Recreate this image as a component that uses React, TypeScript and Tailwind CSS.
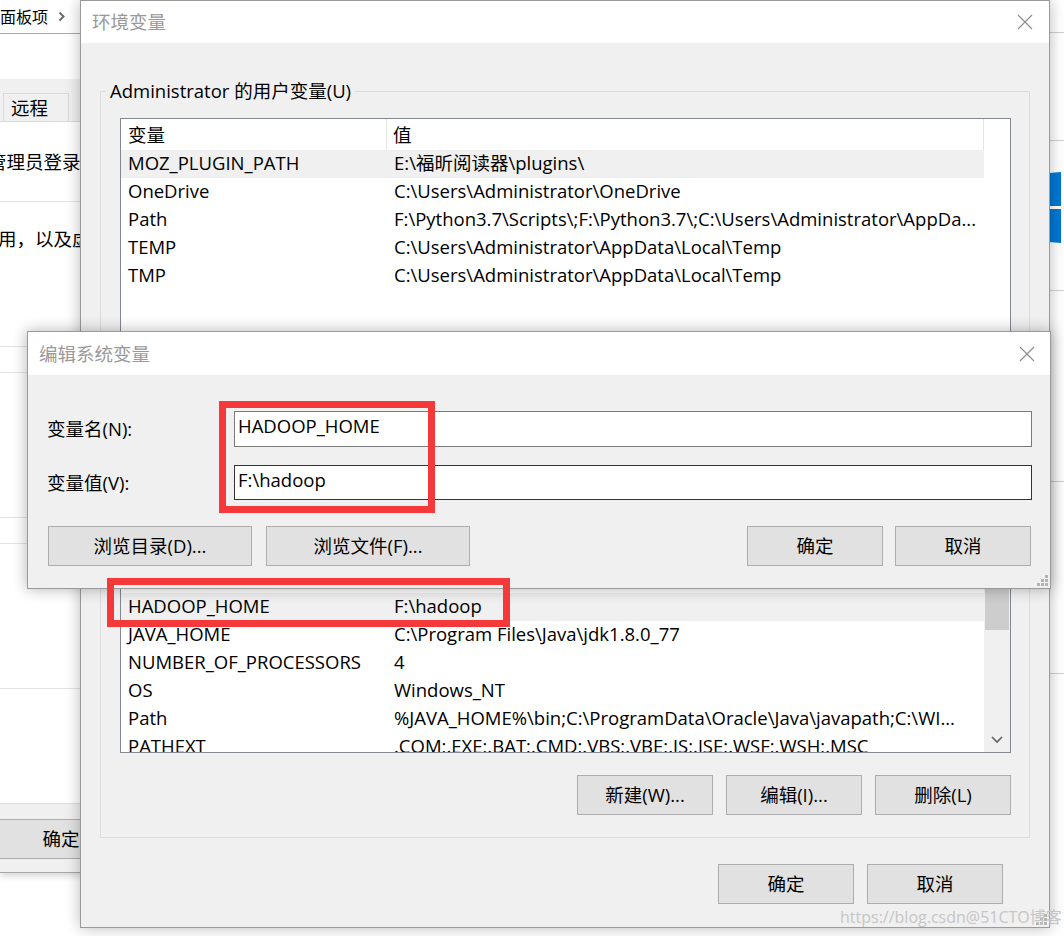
import React from "react";

type Row = [string, string];

const userRows: Row[] = [
  ["MOZ_PLUGIN_PATH", "E:\\福昕阅读器\\plugins\\"],
  ["OneDrive", "C:\\Users\\Administrator\\OneDrive"],
  ["Path", "F:\\Python3.7\\Scripts\\;F:\\Python3.7\\;C:\\Users\\Administrator\\AppDa..."],
  ["TEMP", "C:\\Users\\Administrator\\AppData\\Local\\Temp"],
  ["TMP", "C:\\Users\\Administrator\\AppData\\Local\\Temp"],
];

const sysRows: Row[] = [
  ["ComSpec", "C:\\WINDOWS\\system32\\cmd.exe"],
  ["configsetroot", "C:\\WINDOWS\\ConfigSetRoot"],
  ["DriverData", "C:\\Windows\\System32\\Drivers\\DriverData"],
  ["HADOOP_HOME", "F:\\hadoop"],
  ["JAVA_HOME", "C:\\Program Files\\Java\\jdk1.8.0_77"],
  ["NUMBER_OF_PROCESSORS", "4"],
  ["OS", "Windows_NT"],
  ["Path", "%JAVA_HOME%\\bin;C:\\ProgramData\\Oracle\\Java\\javapath;C:\\WI..."],
  ["PATHEXT", ".COM;.EXE;.BAT;.CMD;.VBS;.VBE;.JS;.JSE;.WSF;.WSH;.MSC"],
];

function CloseX() {
  return (
    <svg width="16" height="16" viewBox="0 0 16 16" className="shrink-0">
      <path d="M1 1L15 15M15 1L1 15" stroke="#8c8c8c" strokeWidth="1.1" fill="none" />
    </svg>
  );
}

function Grip() {
  return (
    <svg width="11" height="11" viewBox="0 0 11 11" className="absolute right-[2px] bottom-[2px]">
      {[
        [8, 0],
        [8, 4],
        [4, 4],
        [8, 8],
        [4, 8],
        [0, 8],
      ].map(([x, y], i) => (
        <rect key={i} x={x} y={y} width="3" height="3" fill="#b4b4b4" />
      ))}
    </svg>
  );
}

function Btn({ children, w = "w-[136px]" }: { children: React.ReactNode; w?: string }) {
  return (
    <div
      className={`${w} h-[40px] shrink-0 flex items-center justify-center bg-[#e1e1e1] border border-[#adadad] leading-[24px] text-black whitespace-nowrap`}
    >
      {children}
    </div>
  );
}

function VarList({
  rows,
  selected,
  height,
  scroll = false,
}: {
  rows: Row[];
  selected: number;
  height: string;
  scroll?: boolean;
}) {
  return (
    <div className={`${height} shrink-0 flex border border-[#828790] bg-white overflow-hidden`}>
      <div className="w-[863px] shrink-0 flex flex-col">
        <div className="h-[31px] shrink-0 flex border-r border-[#e5e5e5] leading-[31px]">
          <div className="w-[266px] shrink-0 pl-[7px] border-r border-[#e5e5e5]">变量</div>
          <div className="flex-1 pl-[6px]">值</div>
        </div>
        {rows.map(([n, v], i) => (
          <div
            key={n + i}
            className={`h-[28px] shrink-0 flex leading-[25px] whitespace-nowrap ${
              i === selected ? "bg-[#f0f0f0]" : ""
            }`}
          >
            <div className="w-[266px] shrink-0 pl-[7px] overflow-hidden">{n}</div>
            <div className="flex-1 pl-[7px] overflow-hidden">{v}</div>
          </div>
        ))}
      </div>
      {scroll ? (
        <div className="flex-1 flex flex-col bg-[#f0f0f0]">
          <div className="h-[25px] shrink-0 flex items-center justify-center">
            <svg width="12" height="8" viewBox="0 0 12 8">
              <path d="M1 7L6 2L11 7" stroke="#606060" strokeWidth="1.6" fill="none" />
            </svg>
          </div>
          <div className="mt-[40px] mx-[1px] h-[87px] bg-[#cdcdcd]" />
          <div className="flex-1" />
          <div className="h-[25px] shrink-0 flex items-center justify-center">
            <svg width="12" height="8" viewBox="0 0 12 8">
              <path d="M1 1L6 6L11 1" stroke="#606060" strokeWidth="1.6" fill="none" />
            </svg>
          </div>
        </div>
      ) : (
        <div className="flex-1" />
      )}
    </div>
  );
}

function BackWindow() {
  return (
    <div className="absolute left-0 top-0 w-[150px] h-[873px] flex flex-col bg-white border-b border-[#a8a8a8] shadow-[0_2px_8px_rgba(0,0,0,0.2)] whitespace-nowrap overflow-hidden">
      <div className="h-[34px] shrink-0 flex items-center gap-[10px] border-b border-[#a8a8a8] text-[16px]">
        <span className="leading-[22px]">面板项</span>
        <svg width="8" height="11" viewBox="0 0 8 11">
          <path d="M1.5 1.5L5.5 5.5L1.5 9.5" stroke="#6a6a6a" strokeWidth="2" fill="none" />
        </svg>
      </div>
      <div className="h-[45px] shrink-0" />
      <div className="h-[43px] shrink-0 bg-[#f0f0f0] border-b border-[#d9d9d9] flex">
        <div className="mt-[14px] ml-[3px] w-[66px] h-[28px] border-x border-t border-[#d9d9d9] flex items-center pl-[7px]">
          远程
        </div>
      </div>
      <div className="h-[80px] shrink-0 flex items-center border-b border-[#e3e3e3]">
        <span className="-ml-[12px] leading-[24px]">管理员登录。</span>
      </div>
      <div className="h-[145px] shrink-0 pt-[25px] border-b border-[#e3e3e3]">
        <div className="-ml-[2px] leading-[24px]">用，以及虚</div>
      </div>
      <div className="h-[26px] shrink-0 border-b border-[#e3e3e3]" />
      <div className="h-[145px] shrink-0 border-b border-[#e3e3e3]" />
      <div className="h-[26px] shrink-0 border-b border-[#e3e3e3]" />
      <div className="h-[145px] shrink-0 border-b border-[#e3e3e3]" />
      <div className="flex-1" />
      <div className="h-[69px] shrink-0 border-t border-[#dcdcdc] bg-[#f0f0f0] pt-[15px]">
        <div className="-ml-[7px]">
          <Btn>确定</Btn>
        </div>
      </div>
    </div>
  );
}

function SideWindow() {
  return (
    <div className="absolute left-[1049px] top-0 w-[15px] h-[936px] flex flex-col bg-white">
      <div className="h-[33px] shrink-0 border-b border-[#d0d0d0]" />
      <div className="h-[108px] shrink-0 border-b border-[#d0d0d0]" />
      <div className="h-[150px] shrink-0 border-b border-[#d0d0d0] pt-[31px]">
        <svg width="12" height="71" viewBox="0 0 12 71">
          <polygon points="0,1 12,0 12,34 0,34" fill="#0078d4" />
          <polygon points="0,37 12,37 12,71 0,70" fill="#0078d4" />
        </svg>
      </div>
      <div className="h-[191px] shrink-0 border-b border-[#d0d0d0]" />
      <div className="h-[192px] shrink-0 border-b border-[#d0d0d0]" />
    </div>
  );
}

function EnvDialog() {
  return (
    <div className="absolute left-[80px] top-0 w-[970px] h-[928px] flex flex-col bg-[#f0f0f0] border border-[#9a9a9a] shadow-[0_0_14px_rgba(0,0,0,0.28)]">
      <div className="h-[42px] shrink-0 bg-white flex items-center justify-between pl-[11px] pr-[16px]">
        <span className="leading-[24px] text-[#999999]">环境变量</span>
        <CloseX />
      </div>
      <div className="flex-1 flex flex-col px-[19px]">
        <fieldset className="mt-[36px] min-w-0 border border-[#dcdcdc] pl-[19px] pr-[18px] pb-[14px]">
          <legend className="-ml-[14px] px-[4px] leading-[24px]">Administrator 的用户变量(U)</legend>
          <div className="mt-[15px]">
            <VarList rows={userRows} selected={0} height="h-[235px]" />
          </div>
          <div className="mt-[13px] flex justify-end gap-[13px]">
            <Btn>新建(N)...</Btn>
            <Btn>编辑(E)...</Btn>
            <Btn>删除(D)</Btn>
          </div>
        </fieldset>
        <fieldset className="mt-[17px] min-w-0 border border-[#dcdcdc] pl-[19px] pr-[18px] pb-[22px]">
          <legend className="-ml-[14px] px-[4px] leading-[24px]">系统变量(S)</legend>
          <div className="mt-[15px]">
            <VarList rows={sysRows} selected={3} height="h-[276px]" scroll />
          </div>
          <div className="mt-[22px] flex justify-end gap-[13px]">
            <Btn>新建(W)...</Btn>
            <Btn>编辑(I)...</Btn>
            <Btn>删除(L)</Btn>
          </div>
        </fieldset>
        <div className="mt-[26px] flex justify-end gap-[13px] pr-[27px]">
          <Btn>确定</Btn>
          <Btn>取消</Btn>
        </div>
      </div>
      <Grip />
    </div>
  );
}

function EditDialog() {
  return (
    <div className="absolute left-[27px] top-[331px] w-[1024px] h-[258px] flex flex-col bg-[#f0f0f0] border border-[#9a9a9a] shadow-[0_0_14px_rgba(0,0,0,0.3)]">
      <div className="h-[43px] shrink-0 bg-white flex items-center justify-between pl-[11px] pr-[15px]">
        <span className="leading-[24px] text-[#999999]">编辑系统变量</span>
        <CloseX />
      </div>
      <div className="flex-1 flex flex-col pt-[36px] pl-[19px] pr-[18px]">
        <div className="flex items-center">
          <div className="w-[187px] shrink-0 leading-[24px]">变量名(N):</div>
          <div className="flex-1 h-[36px] bg-white border border-[#7a7a7a] pl-[3px] pt-[2px] leading-[24px]">
            HADOOP_HOME
          </div>
        </div>
        <div className="mt-[18px] flex items-center">
          <div className="w-[187px] shrink-0 leading-[24px]">变量值(V):</div>
          <div className="flex-1 h-[35px] bg-white border border-[#333333] pl-[3px] pt-[2px] leading-[24px]">
            F:\hadoop
          </div>
        </div>
        <div className="mt-[26px] ml-[1px] mr-[1px] flex gap-[14px]">
          <Btn w="w-[204px]">浏览目录(D)...</Btn>
          <Btn w="w-[204px]">浏览文件(F)...</Btn>
          <div className="flex-1" />
          <div className="flex gap-[12px]">
            <Btn>确定</Btn>
            <Btn>取消</Btn>
          </div>
        </div>
      </div>
      <Grip />
    </div>
  );
}

export default function App() {
  return (
    <div className="relative w-[1064px] h-[936px] overflow-hidden bg-white text-[18.5px] text-black font-['Open_Sans','Noto_Sans_CJK_SC',sans-serif]">
      <BackWindow />
      <SideWindow />
      <EnvDialog />
      <EditDialog />
      {/* red annotation boxes */}
      <div className="absolute left-[219px] top-[401px] w-[216px] h-[112px] border-[7px] border-[#f5393b]" />
      <div className="absolute left-[107px] top-[578px] w-[403px] h-[49px] border-[7px] border-[#f5393b]" />
      <div className="absolute left-[840px] top-[906px] text-[16px] leading-[22px] text-[#c6c6c6] whitespace-nowrap">
        https://blog.csdn@51CTO博客
      </div>
    </div>
  );
}
